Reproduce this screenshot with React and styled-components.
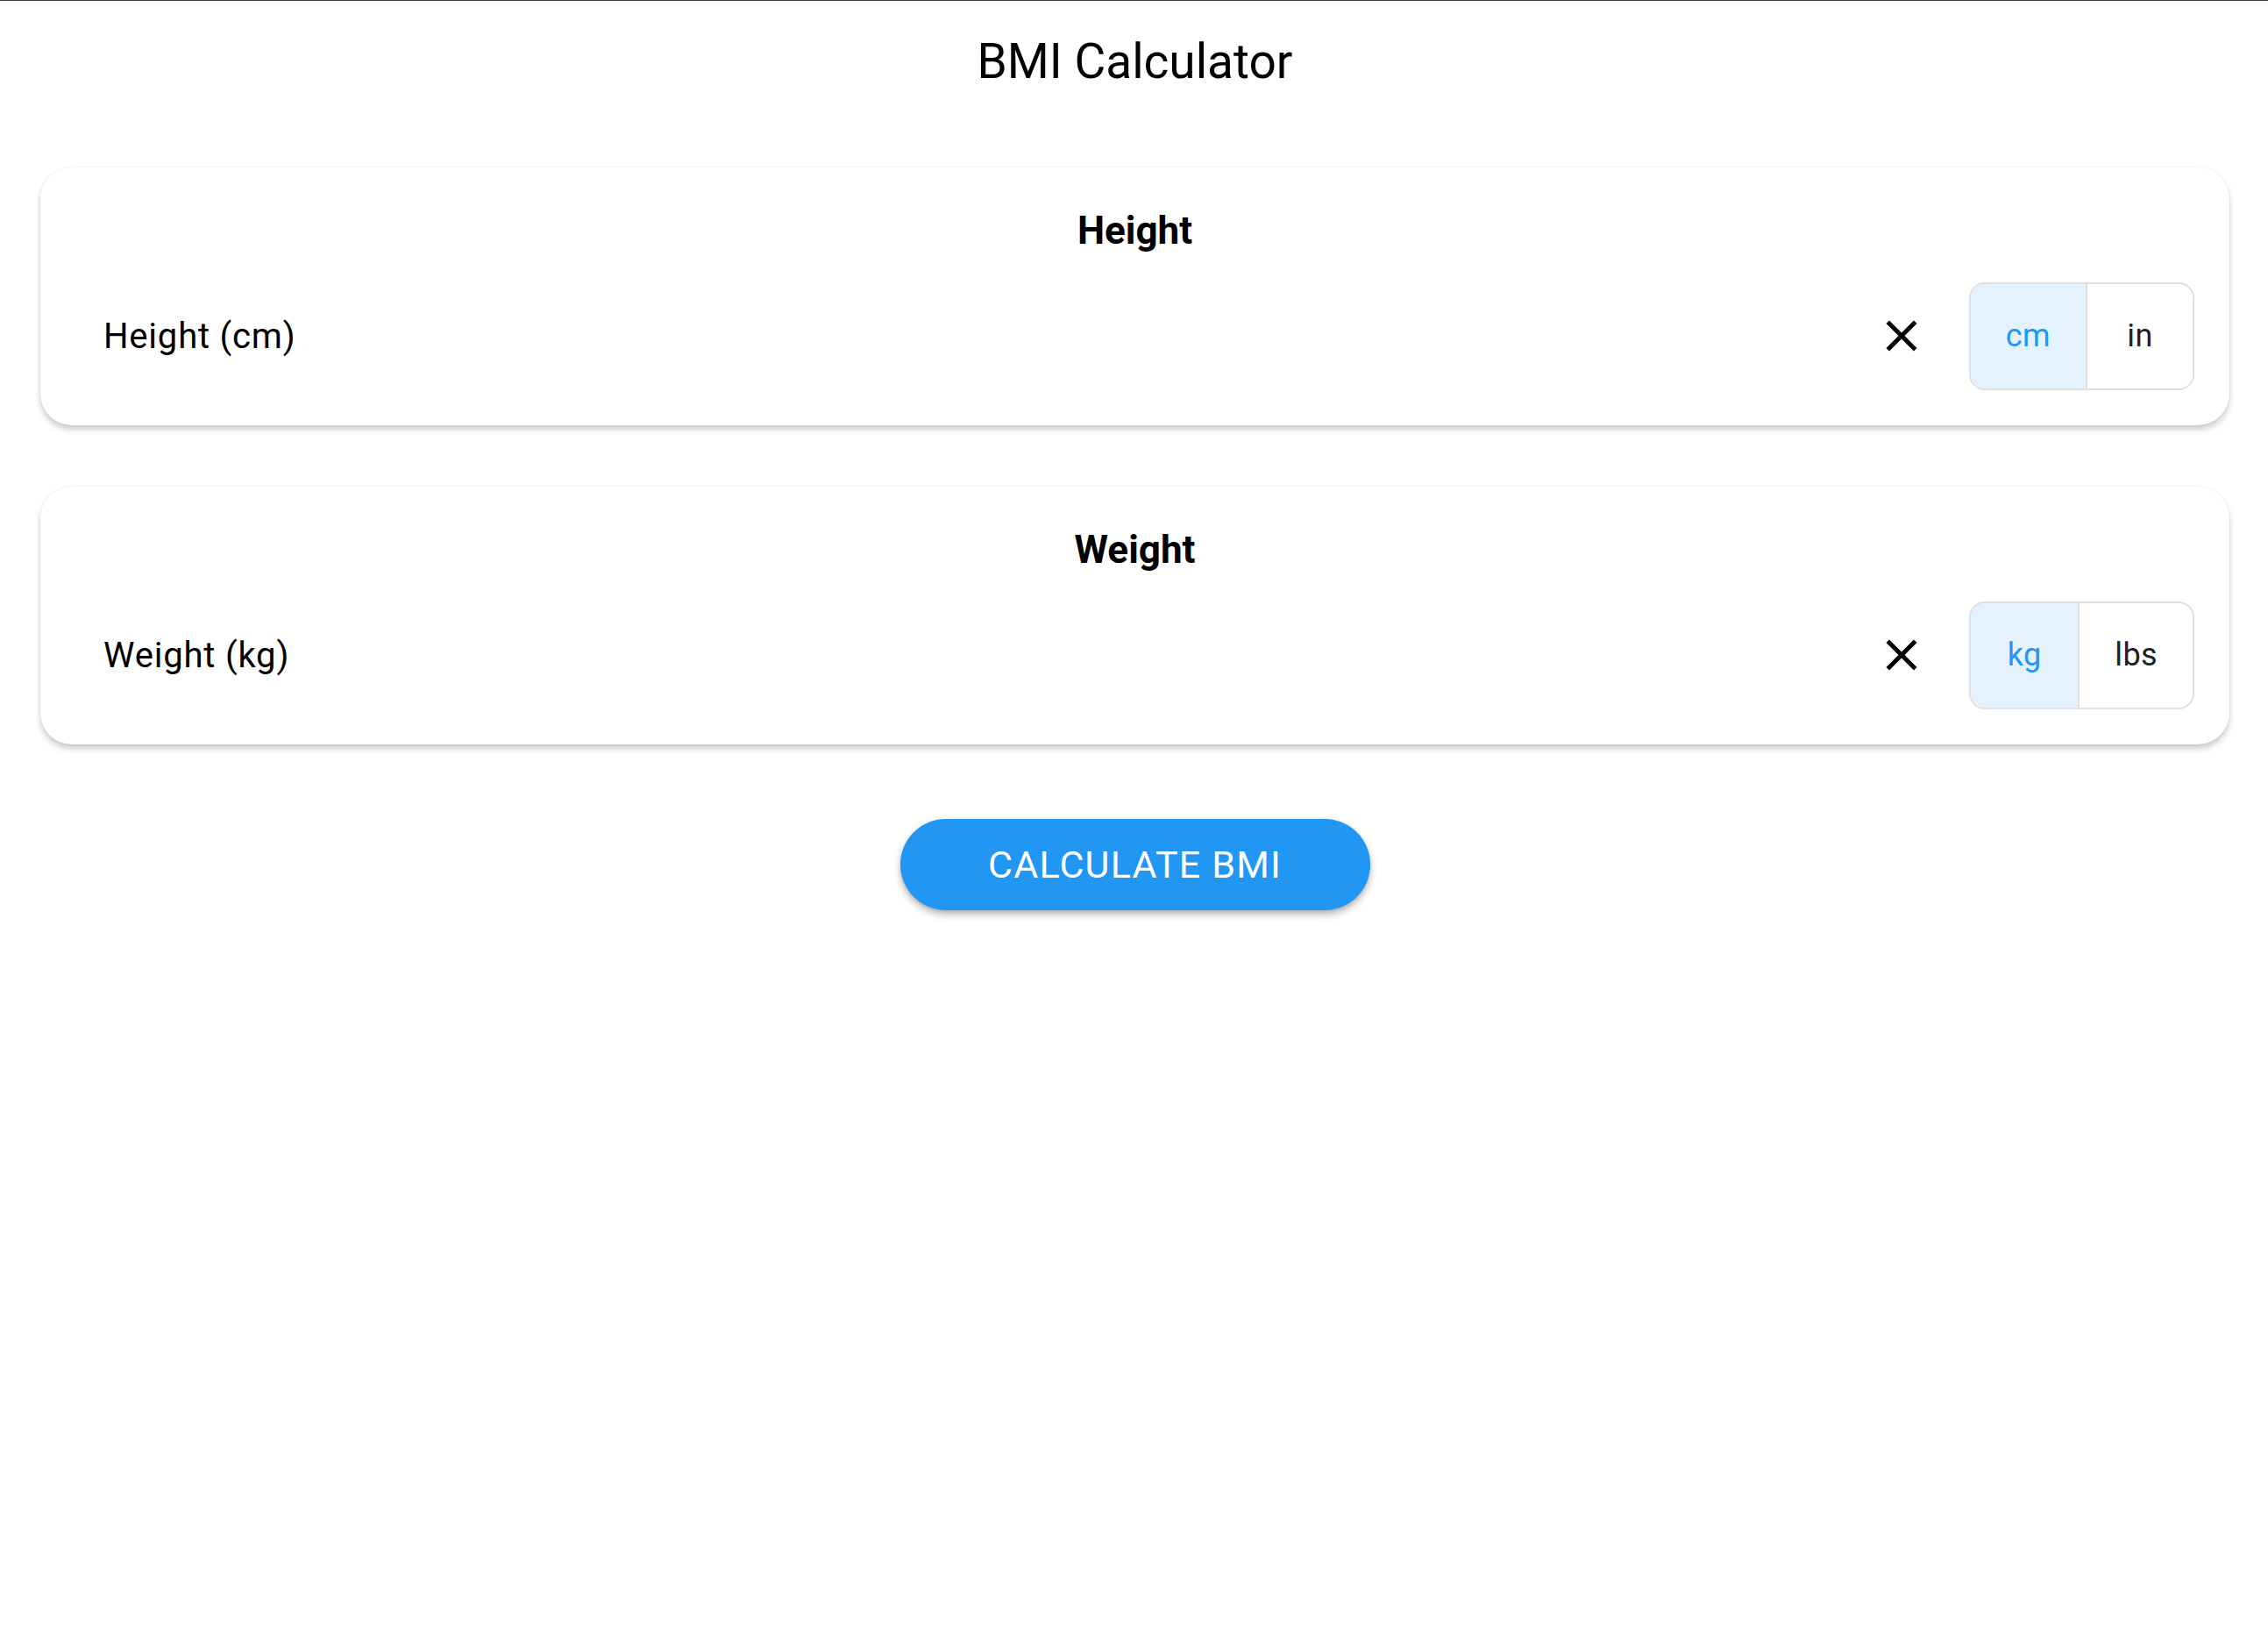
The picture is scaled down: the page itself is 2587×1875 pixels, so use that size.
import React, { useState } from 'react';
import styled, { createGlobalStyle } from 'styled-components';

const GlobalStyle = createGlobalStyle`
  html, body {
    margin: 0;
    padding: 0;
    background: #ffffff;
  }

  body {
    border-top: 1px solid #3c3c3c;
    font-family: Roboto, 'Liberation Sans', sans-serif;
    color: #000000;
  }
`;

const Page = styled.div`
  display: flex;
  flex-direction: column;
  padding: 0 44px 80px 46px;
`;

const Title = styled.h1`
  margin: 36px 0 88px;
  text-align: center;
  font-size: 55px;
  font-weight: 400;
  line-height: 1.2;
`;

const CardList = styled.div`
  display: flex;
  flex-direction: column;
  gap: 70px;
`;

const StyledCard = styled.section`
  display: flex;
  flex-direction: column;
  padding: 46px 40px 40px 40px;
  background-color: white;
  border-radius: 36px;
  box-shadow: 0px 5px 7px rgba(0, 0, 0, 0.2), 0px 0px 3px rgba(0, 0, 0, 0.06);
`;

const CardTitle = styled.h2`
  margin: 0 0 32px;
  text-align: center;
  font-size: 44px;
  font-weight: 700;
  line-height: 1.2;
`;

const FieldRow = styled.div`
  display: flex;
  align-items: center;
`;

const FieldLabel = styled.div`
  flex: 1;
  padding-left: 32px;
  font-size: 40px;
  letter-spacing: 0.8px;
  color: #000000;
`;

const ClearButton = styled.button`
  display: flex;
  align-items: center;
  justify-content: center;
  width: 60px;
  height: 60px;
  margin-right: 47px;
  padding: 0;
  border: none;
  background: none;
  cursor: pointer;
`;

const UnitToggle = styled.div`
  display: flex;
  height: 123px;
  box-sizing: border-box;
  border: 2px solid #e0e0e0;
  border-radius: 18px;
  overflow: hidden;
`;

const UnitOption = styled.button`
  min-width: 122px;
  padding: 0 40px;
  border: none;
  border-left: ${(props) => (props.$first ? 'none' : '2px solid #e0e0e0')};
  background-color: ${(props) => (props.$selected ? '#e3f2fd' : '#ffffff')};
  color: ${(props) => (props.$selected ? '#2196f3' : '#212121')};
  font-family: Roboto, 'Liberation Sans', sans-serif;
  font-size: 36px;
  letter-spacing: 0.4px;
  cursor: pointer;
`;

const CalculateButton = styled.button`
  align-self: center;
  margin-top: 85px;
  width: 536px;
  height: 104px;
  border: none;
  border-radius: 52px;
  background-color: #2196f3;
  color: #ffffff;
  font-family: Roboto, 'Liberation Sans', sans-serif;
  font-size: 43px;
  letter-spacing: 1.2px;
  box-shadow: 0px 5px 8px rgba(0, 0, 0, 0.28), 0px 1px 3px rgba(0, 0, 0, 0.12);
  cursor: pointer;
`;

const CloseIcon = () => (
  <svg width="60" height="60" viewBox="0 0 24 24" fill="#000000">
    <path d="M19 6.41L17.59 5 12 10.59 6.41 5 5 6.41 10.59 12 5 17.59 6.41 19 12 13.41 17.59 19 19 17.59 13.41 12z" />
  </svg>
);

const MeasureCard = ({ title, units, unit, onUnitChange }) => {
  return (
    <StyledCard>
      <CardTitle>{title}</CardTitle>
      <FieldRow>
        <FieldLabel>
          {title} ({unit})
        </FieldLabel>
        <ClearButton aria-label="clear">
          <CloseIcon />
        </ClearButton>
        <UnitToggle>
          {units.map((u, i) => (
            <UnitOption
              key={u}
              $first={i === 0}
              $selected={u === unit}
              onClick={() => onUnitChange(u)}
            >
              {u}
            </UnitOption>
          ))}
        </UnitToggle>
      </FieldRow>
    </StyledCard>
  );
};

const App = () => {
  const [heightUnit, setHeightUnit] = useState('cm');
  const [weightUnit, setWeightUnit] = useState('kg');

  return (
    <>
      <GlobalStyle />
      <Page>
        <Title>BMI Calculator</Title>
        <CardList>
          <MeasureCard
            title="Height"
            units={['cm', 'in']}
            unit={heightUnit}
            onUnitChange={setHeightUnit}
          />
          <MeasureCard
            title="Weight"
            units={['kg', 'lbs']}
            unit={weightUnit}
            onUnitChange={setWeightUnit}
          />
        </CardList>
        <CalculateButton>CALCULATE BMI</CalculateButton>
      </Page>
    </>
  );
};

export default App;
